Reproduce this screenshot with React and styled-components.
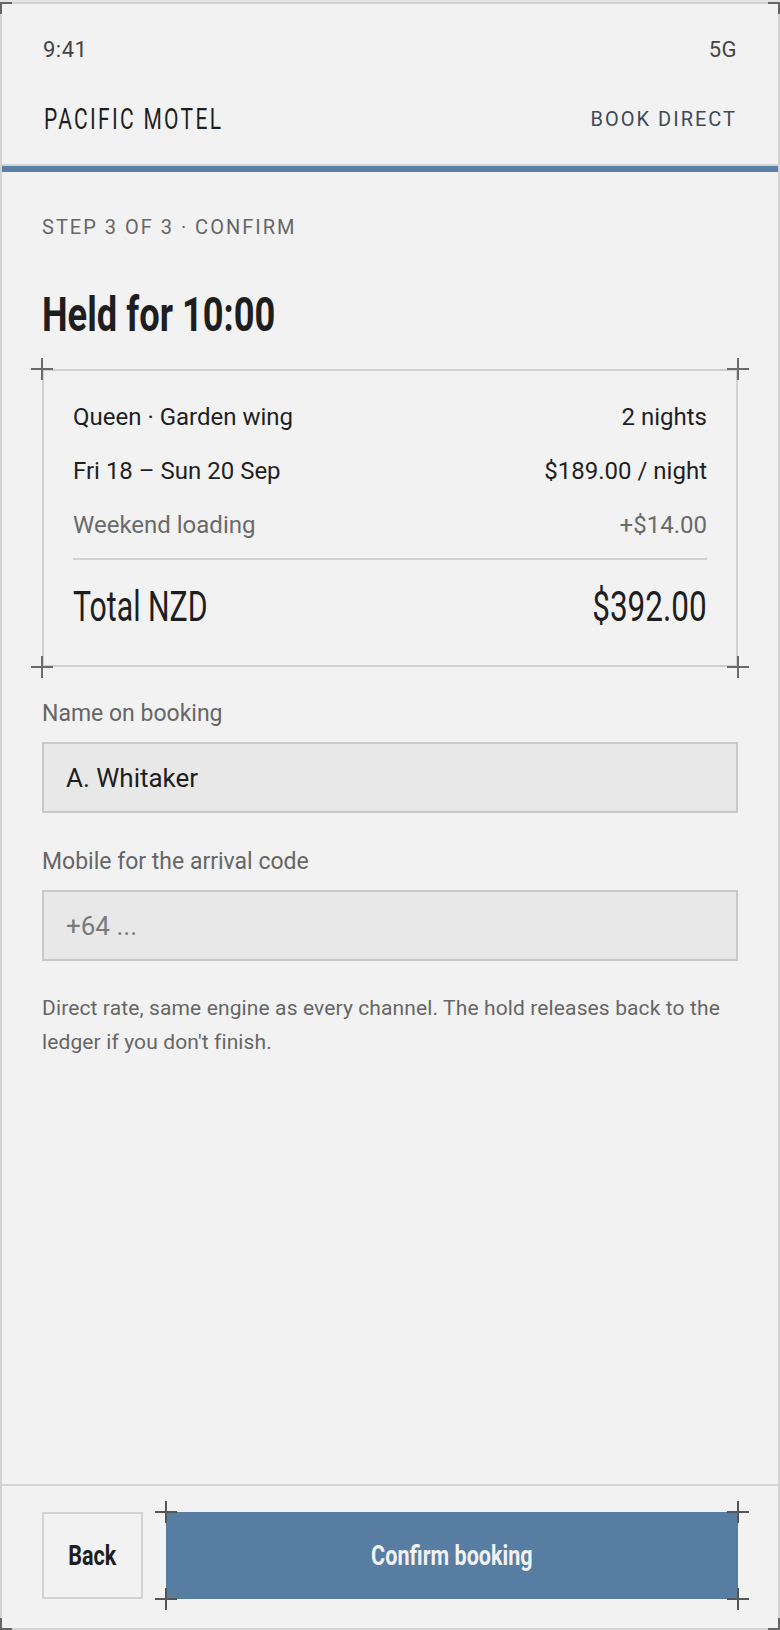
import styled, { createGlobalStyle } from "styled-components";

const sans = `Roboto, "Liberation Sans", sans-serif`;

const GlobalStyle = createGlobalStyle`
  html, body {
    margin: 0;
    padding: 0;
    background: #e4e4e0;
  }
  * {
    box-sizing: border-box;
  }
`;

const Frame = styled.div`
  position: relative;
  margin-top: 2px;
  width: 780px;
  height: 1628px;
  border: 2px solid #d2d2d2;
  background: #f2f2f2;
  display: flex;
  flex-direction: column;
  font-family: ${sans};
  color: #1f1f1f;
`;

const FrameCorner = styled.span`
  position: absolute;
  width: 12px;
  height: 12px;
  ${(p) => (p.$top ? "top: -2px;" : "bottom: -2px;")}
  ${(p) => (p.$left ? "left: -2px;" : "right: -2px;")}
  border-color: #666;
  border-style: solid;
  border-width: 0;
  ${(p) => (p.$top ? "border-top-width: 2px;" : "border-bottom-width: 2px;")}
  ${(p) => (p.$left ? "border-left-width: 2px;" : "border-right-width: 2px;")}
`;

// condensed face: no narrow font is installed, so Roboto is squeezed
const Squeeze = styled.span`
  display: inline-block;
  white-space: nowrap;
  transform: scaleX(${(p) => p.$x || 0.72});
  transform-origin: ${(p) => p.$origin || "center"};
`;

const StatusBar = styled.div`
  display: flex;
  justify-content: space-between;
  padding: 33px 41px 0 41px;
  font-size: 22px;
  line-height: 26px;
  color: #444;
  letter-spacing: 0.5px;
`;

const Header = styled.header`
  display: flex;
  justify-content: space-between;
  align-items: center;
  height: 103px;
  padding: 11px 41px 0 42px;
  border-bottom: 2px solid #d4d4d4;
`;

const Brand = styled.div`
  font-size: 30px;
  line-height: 34px;
  letter-spacing: 3.3px;
  color: #1f1f1f;
`;

const BookDirect = styled.div`
  font-size: 20px;
  letter-spacing: 2px;
  color: #3d4a57;
`;

const AccentBar = styled.div`
  height: 6px;
  background: #5a7fa4;
`;

const Main = styled.main`
  flex: 1;
  padding: 43px 40px 0;
`;

const StepLabel = styled.div`
  font-size: 20px;
  line-height: 24px;
  letter-spacing: 2px;
  color: #666;
`;

const Title = styled.h1`
  margin: 51px 0 0;
  font-weight: 700;
  font-size: 49px;
  line-height: 50px;
  color: #1e1e1e;
`;

const Marked = styled.div`
  position: relative;
  ${(p) => p.$grow && "flex: 1;"}
`;

const Tick = styled.span`
  position: absolute;
  width: 22px;
  height: 22px;
  pointer-events: none;
  ${(p) => (p.$top ? "top: -11px;" : "bottom: -11px;")}
  ${(p) => (p.$left ? "left: -11px;" : "right: -11px;")}

  &::before,
  &::after {
    content: "";
    position: absolute;
    background: ${(p) => p.$color};
  }
  &::before {
    left: 0;
    right: 0;
    top: 10px;
    height: 2px;
  }
  &::after {
    top: 0;
    bottom: 0;
    left: 10px;
    width: 2px;
  }
`;

function Crosshairs({ children, grow, color = "#6a6a6a" }) {
  return (
    <Marked $grow={grow}>
      {children}
      <Tick $top $left $color={color} />
      <Tick $top $color={color} />
      <Tick $left $color={color} />
      <Tick $color={color} />
    </Marked>
  );
}

const Summary = styled.section`
  margin-top: 29px;
  border: 2px solid #d0d0d0;
  padding: 31px 29px 34px;
`;

const Lines = styled.div`
  display: flex;
  flex-direction: column;
  gap: 24px;
  padding-bottom: 18px;
  border-bottom: 2px solid #d0d0d0;
`;

const Line = styled.div`
  display: flex;
  justify-content: space-between;
  font-size: 24px;
  line-height: 30px;
  color: ${(p) => (p.$muted ? "#6a6a6a" : "#1f1f1f")};
`;

const TotalRow = styled.div`
  display: flex;
  justify-content: space-between;
  margin-top: 23px;
  font-size: 42px;
  line-height: 48px;
  color: #1e1e1e;
`;

const Form = styled.form`
  display: flex;
  flex-direction: column;
  gap: 35px;
  margin-top: 33px;
`;

const Field = styled.label`
  display: flex;
  flex-direction: column;
  gap: 14px;
`;

const FieldLabel = styled.span`
  font-size: 23px;
  line-height: 28px;
  color: #666;
`;

const Input = styled.input`
  height: 71px;
  padding: 0 22px;
  border: 2px solid #c9c9c9;
  border-radius: 0;
  background: #e8e8e8;
  font-family: ${sans};
  font-size: 26px;
  color: #1e1e1e;
  outline: none;

  &::placeholder {
    color: #7a7a7a;
  }
`;

const Note = styled.p`
  margin: 30px 0 0;
  font-size: 21px;
  line-height: 34px;
  letter-spacing: 0.12px;
  color: #666;
`;

const Footer = styled.footer`
  display: flex;
  gap: 23px;
  padding: 26px 40px 29px;
  border-top: 2px solid #d4d4d4;
`;

const Button = styled.button`
  height: 87px;
  width: ${(p) => (p.$primary ? "100%" : "101px")};
  border: ${(p) => (p.$primary ? "none" : "2px solid #d2d2d2")};
  border-radius: 0;
  background: ${(p) => (p.$primary ? "#577da2" : "transparent")};
  color: ${(p) => (p.$primary ? "#f2f2f2" : "#1e1e1e")};
  font-family: ${sans};
  font-weight: 700;
  font-size: 28px;
  cursor: pointer;
`;

export default function App() {
  return (
    <>
      <GlobalStyle />
      <Frame>
        <FrameCorner $top $left />
        <FrameCorner $top />
        <FrameCorner $left />
        <FrameCorner />

        <StatusBar>
          <span>9:41</span>
          <span>5G</span>
        </StatusBar>

        <Header>
          <Brand>
            <Squeeze $x={0.7} $origin="left">PACIFIC MOTEL</Squeeze>
          </Brand>
          <BookDirect>BOOK DIRECT</BookDirect>
        </Header>
        <AccentBar />

        <Main>
          <StepLabel>STEP 3 OF 3 · CONFIRM</StepLabel>
          <Title>
            <Squeeze $x={0.74} $origin="left">Held for 10:00</Squeeze>
          </Title>

          <Crosshairs>
            <Summary>
              <Lines>
                <Line>
                  <span>Queen · Garden wing</span>
                  <span>2 nights</span>
                </Line>
                <Line>
                  <span>Fri 18 – Sun 20 Sep</span>
                  <span>$189.00 / night</span>
                </Line>
                <Line $muted>
                  <span>Weekend loading</span>
                  <span>+$14.00</span>
                </Line>
              </Lines>
              <TotalRow>
                <Squeeze $origin="left">Total NZD</Squeeze>
                <Squeeze $x={0.75} $origin="right">$392.00</Squeeze>
              </TotalRow>
            </Summary>
          </Crosshairs>

          <Form onSubmit={(e) => e.preventDefault()}>
            <Field>
              <FieldLabel>Name on booking</FieldLabel>
              <Input defaultValue="A. Whitaker" />
            </Field>
            <Field>
              <FieldLabel>Mobile for the arrival code</FieldLabel>
              <Input placeholder="+64 ..." />
            </Field>
          </Form>

          <Note>
            Direct rate, same engine as every channel. The hold releases back
            to the ledger if you don't finish.
          </Note>
        </Main>

        <Footer>
          <Button>
            <Squeeze $x={0.77}>Back</Squeeze>
          </Button>
          <Crosshairs grow color="#555">
            <Button $primary>
              <Squeeze $x={0.77}>Confirm booking</Squeeze>
            </Button>
          </Crosshairs>
        </Footer>
      </Frame>
    </>
  );
}
